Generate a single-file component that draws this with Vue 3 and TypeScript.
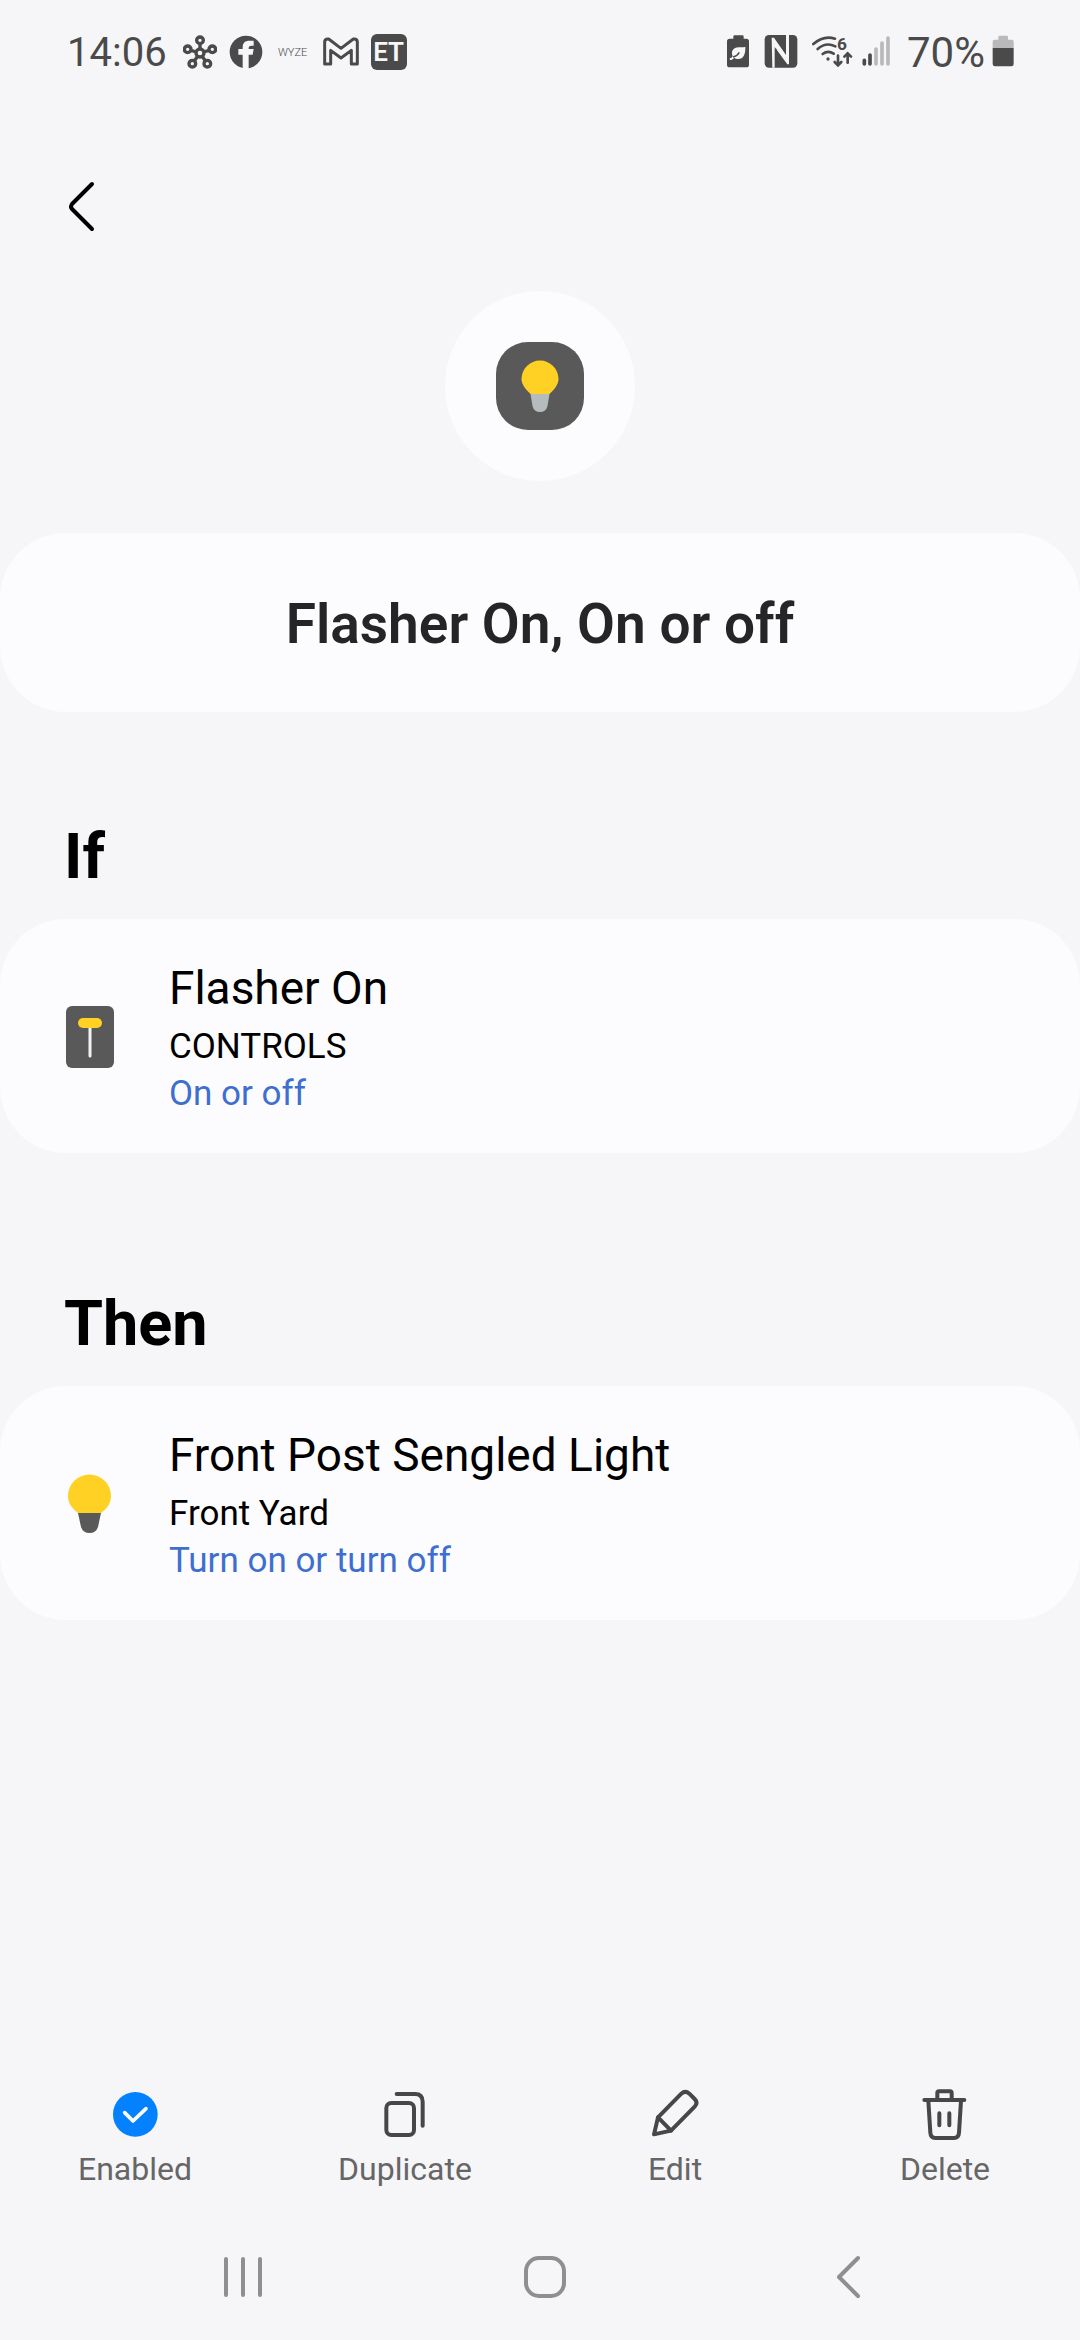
<script setup lang="ts">
interface Step {
  heading: string
  icon: 'switch' | 'bulb'
  name: string
  room: string
  state: string
}

const steps: Step[] = [
  { heading: 'If', icon: 'switch', name: 'Flasher On', room: 'CONTROLS', state: 'On or off' },
  { heading: 'Then', icon: 'bulb', name: 'Front Post Sengled Light', room: 'Front Yard', state: 'Turn on or turn off' },
]
</script>

<template>
  <div class="screen">
    <div class="status">
      <div class="status-left">
        <span class="clock">14:06</span>
        <svg width="34" height="34" viewBox="398 46 102 102" fill="none" stroke="#4a4a4a" stroke-width="10">
          <path d="M449 100V66M449 100L414 90M449 100L484 90M449 100L427 131M449 100L470 131" />
          <g fill="#f6f6f8">
            <circle cx="449" cy="62" r="10" />
            <circle cx="412" cy="89" r="10" />
            <circle cx="486" cy="89" r="10" />
            <circle cx="426" cy="132" r="10" />
            <circle cx="471" cy="132" r="10" />
            <circle cx="449" cy="100" r="12" />
          </g>
        </svg>
        <svg width="34" height="34" viewBox="538 46 102 102">
          <circle cx="589" cy="97" r="49" fill="#4a4a4a" />
          <path fill="#f6f6f8" d="M579 148V105H566V88H579V82C579 69 587 63 599 63H612V78H605C599 78 597 81 597 85V88H612L609 105H597V148Z" />
        </svg>
        <span class="wyze">WYZE</span>
        <svg width="36" height="34" viewBox="818 46 108 102" fill="none" stroke="#4a4a4a" stroke-width="9" stroke-linejoin="round">
          <path d="M823 133V67Q823 58 832 58H835L872 86L909 58H912Q921 58 921 67V133H903V92L872 115L841 92V133Z" />
        </svg>
        <span class="badge">ET</span>
      </div>
      <div class="status-right">
        <svg width="24" height="34" viewBox="75 46 72 102">
          <path fill="#4a4a4a" d="M97 57V51Q97 47 101 47H124Q128 47 128 51V57H136Q144 57 144 65V135Q144 143 136 143H86Q78 143 78 135V65Q78 57 86 57Z" />
          <path fill="#f6f6f8" d="M133 81C134 104 127 118 112 118C106 118 102 116 100 114C96 119 92 121 87 121L86 116C90 116 93 114 95 110C89 95 96 84 113 83C121 83 128 83 133 81Z" />
          <path fill="none" stroke="#4a4a4a" stroke-width="4" d="M96 112C104 110 111 105 115 98" />
        </svg>
        <svg width="34" height="34" viewBox="191 46 102 102">
          <rect x="193" y="46" width="98" height="98" rx="13" fill="#4a4a4a" />
          <path fill="#f6f6f8" d="M214 54L221 54L257 106V46H266V134H261L223 82V144H216Z" />
          <path fill="#4a4a4a" d="M227 86V97L252 133H248Z" />
        </svg>
        <svg width="80" height="34" viewBox="333 46 240 102" fill="none" stroke="#4a4a4a" stroke-linecap="round">
          <circle cx="381" cy="118" r="5" fill="#4a4a4a" stroke="none" />
          <g stroke-width="8">
            <path d="M365 103Q381 91 398 102" />
            <path d="M350 88Q375 66 403 80" />
            <path d="M337 73Q368 46 402 57" />
            <path d="M411 108V136M401 127L411 137L421 127" />
            <path d="M440 129V101M430 111L440 101L450 111" />
          </g>
          <text class="six" x="408" y="91" fill="#4a4a4a" stroke="none">6</text>
          <g stroke-width="11">
            <path d="M490 122V133M507 106V133" />
            <path stroke="#b9b9bb" d="M525 88V133M543 70V133M561 55V133" />
          </g>
        </svg>
        <span class="charge">
          <span class="percent">70%</span>
          <svg width="22" height="34" viewBox="874 46 66 102">
            <path fill="#b9b9bb" d="M893 60V52Q893 48 897 48H918Q922 48 922 52V60H934Q939 60 939 66V86H876V66Q876 60 881 60Z" />
            <path fill="#4a4a4a" d="M876 85H939V133Q939 140 932 140H883Q876 140 876 133Z" />
          </svg>
        </span>
      </div>
    </div>

    <header class="toolbar">
      <button class="back" type="button" aria-label="Navigate up">
        <svg width="32" height="56" viewBox="0 0 32 56" fill="none" stroke="#000" stroke-width="4" stroke-linecap="round" stroke-linejoin="round">
          <path d="M28 5L8 25Q6 28 8 30L28 50" />
        </svg>
      </button>
    </header>

    <main>
      <div class="hero">
        <div class="tile">
          <svg width="88" height="88" viewBox="0 0 88 88">
            <path fill="#ffd124" d="M34.500 52C28 46 25.500 41 25.500 37A18.500 18.500 0 0 1 62.500 37C62.500 41 60 46 53.500 52Z" />
            <path fill="#b5bcbe" d="M34.500 52H53.500L51.500 64Q50 70 44 70Q38 70 36.500 64Z" />
          </svg>
        </div>
      </div>

      <h1 class="title">Flasher On, On or off</h1>

      <section v-for="step in steps" :key="step.heading" class="step">
        <h2>{{ step.heading }}</h2>
        <button class="card" type="button">
          <svg v-if="step.icon === 'switch'" width="50" height="64" viewBox="0 0 50 64">
            <rect x="1" y="0" width="48" height="62" rx="6" fill="#595959" />
            <path d="M25 21V50" stroke="#f3f3f3" stroke-width="3" stroke-linecap="round" />
            <rect x="13" y="12" width="24" height="10" rx="5" fill="#ffd124" />
          </svg>
          <svg v-else width="50" height="64" viewBox="0 0 50 64">
            <path fill="#ffd124" d="M13 40C6 35 3 29 3 23A21.500 21.500 0 0 1 46 23C46 29 43 35 36 40Z" />
            <path fill="#595959" d="M13 40H36L33 54Q31 60 24.500 60Q18 60 16 54Z" />
          </svg>
          <span class="lines">
            <span class="name">{{ step.name }}</span>
            <span class="room">{{ step.room }}</span>
            <span class="state">{{ step.state }}</span>
          </span>
        </button>
      </section>
    </main>

    <footer>
      <div class="actions">
        <button type="button" aria-pressed="true">
          <svg width="52" height="52" viewBox="175 54 156 156">
            <circle cx="254" cy="133" r="67" fill="#0381fe" />
            <path d="M222 128L247 153L286 116" fill="none" stroke="#fcfcfe" stroke-width="11" stroke-linecap="round" stroke-linejoin="round" />
          </svg>
          <span>Enabled</span>
        </button>
        <button type="button">
          <svg class="line-icon" width="52" height="52" viewBox="987 54 156 156">
            <rect x="1009" y="99" width="83" height="96" rx="15" />
            <path d="M1040 72H1095Q1118 72 1118 95V167" />
          </svg>
          <span>Duplicate</span>
        </button>
        <button type="button">
          <svg class="line-icon" width="52" height="52" viewBox="147 54 156 156">
            <path d="M174 142L244 71Q256 60 268 71L284 87Q295 98 284 110L213 182L162 193Z" />
            <path d="M174 142L213 182" />
          </svg>
          <span>Edit</span>
        </button>
        <button type="button">
          <svg class="line-icon" width="52" height="52" viewBox="957 54 156 156">
            <path d="M973 90H1093M1012 88V69Q1012 64 1017 64H1050Q1055 64 1055 69V88" />
            <path d="M985 92L991 188Q992 204 1006 204H1062Q1076 204 1077 188L1083 92" />
            <path d="M1018 130V166M1048 130V166" />
          </svg>
          <span>Delete</span>
        </button>
      </div>

      <nav class="system-nav" aria-label="System">
        <button type="button" aria-label="Recents">
          <svg width="48" height="48" viewBox="0 0 48 48">
            <path d="M7 6V42M24 6V42M41 6V42" />
          </svg>
        </button>
        <button type="button" aria-label="Home">
          <svg width="48" height="48" viewBox="0 0 48 48">
            <rect x="5" y="5" width="38" height="38" rx="13" />
          </svg>
        </button>
        <button type="button" aria-label="Back">
          <svg width="48" height="48" viewBox="0 0 48 48">
            <path d="M35 5L16 24L35 43" />
          </svg>
        </button>
      </nav>
    </footer>
  </div>
</template>

<style>
body {
  background: #f6f6f8;
}
</style>

<style scoped>
.screen {
  display: flex;
  flex-direction: column;
  min-height: 100vh;
  background: #f6f6f8;
  color: #000;
  font-family: Roboto, "Noto Sans", sans-serif;
}

svg {
  display: block;
  flex: none;
}

button {
  margin: 0;
  padding: 0;
  border: 0;
  background: none;
  color: inherit;
  font: inherit;
}

.status {
  display: flex;
  align-items: center;
  justify-content: space-between;
  height: 104px;
  padding: 0 66px 0 67px;
  color: #4a4a4a;
  font-size: 40px;
}

.status-left {
  display: flex;
  align-items: center;
  gap: 12px;
}

.status-right {
  display: flex;
  align-items: center;
  gap: 14px;
}

.clock {
  margin-right: 4px;
}

.wyze {
  width: 36px;
  font-size: 11px;
  font-weight: 300;
  text-align: center;
}

.badge {
  width: 36px;
  border-radius: 6px;
  background: #4a4a4a;
  color: #f6f6f8;
  font-size: 26px;
  font-weight: 600;
  line-height: 36px;
  text-align: center;
}

.six {
  font-size: 52px;
  font-weight: 700;
}

.charge {
  display: flex;
  align-items: center;
  gap: 6px;
}

.percent {
  min-width: 80px;
  font-size: 42px;
  text-align: center;
}

.toolbar {
  padding: 63px 64px 44px;
}

.back {
  display: flex;
  align-items: center;
  width: 80px;
  height: 80px;
}

.hero {
  display: flex;
  align-items: center;
  justify-content: center;
  width: 190px;
  height: 190px;
  margin: 0 auto 52px;
  border-radius: 50%;
  background: #fcfcfe;
}

.tile {
  border-radius: 32px;
  background: #595959;
}

.title {
  margin: 0;
  padding: 55px 64px 52px;
  border-radius: 66px;
  background: #fcfcfe;
  color: #252528;
  font-size: 55px;
  font-weight: 600;
  line-height: 72px;
  text-align: center;
}

.step {
  margin-bottom: 26px;
  padding-top: 105px;
}

h2 {
  margin: 0 64px 22px;
  font-size: 63px;
  font-weight: 700;
  line-height: 80px;
}

.card {
  display: flex;
  align-items: center;
  gap: 54px;
  width: 100%;
  padding: 39px 65px 36px;
  border-radius: 66px;
  background: #fcfcfe;
  text-align: left;
}

.lines {
  display: flex;
  flex-direction: column;
  font-size: 35px;
  line-height: 47px;
}

.name {
  margin-bottom: 5px;
  font-size: 46px;
  line-height: 60px;
}

.state {
  color: #3e6fd0;
}

footer {
  margin-top: auto;
}

.actions {
  display: grid;
  grid-template-columns: repeat(4, 1fr);
  padding-bottom: 25px;
  color: #666;
  font-size: 32px;
  line-height: 40px;
}

.actions button {
  display: flex;
  flex-direction: column;
  align-items: center;
  gap: 9px;
}

.line-icon {
  fill: none;
  stroke: #474747;
  stroke-width: 12;
  stroke-linecap: round;
  stroke-linejoin: round;
}

.system-nav {
  display: grid;
  grid-template-columns: repeat(3, 1fr);
  height: 126px;
  padding: 0 82px 0 92px;
}

.system-nav button {
  display: flex;
  align-items: center;
  justify-content: center;
}

.system-nav svg {
  fill: none;
  stroke: #8f8f8f;
  stroke-width: 4;
  stroke-linecap: round;
  stroke-linejoin: round;
}
</style>
